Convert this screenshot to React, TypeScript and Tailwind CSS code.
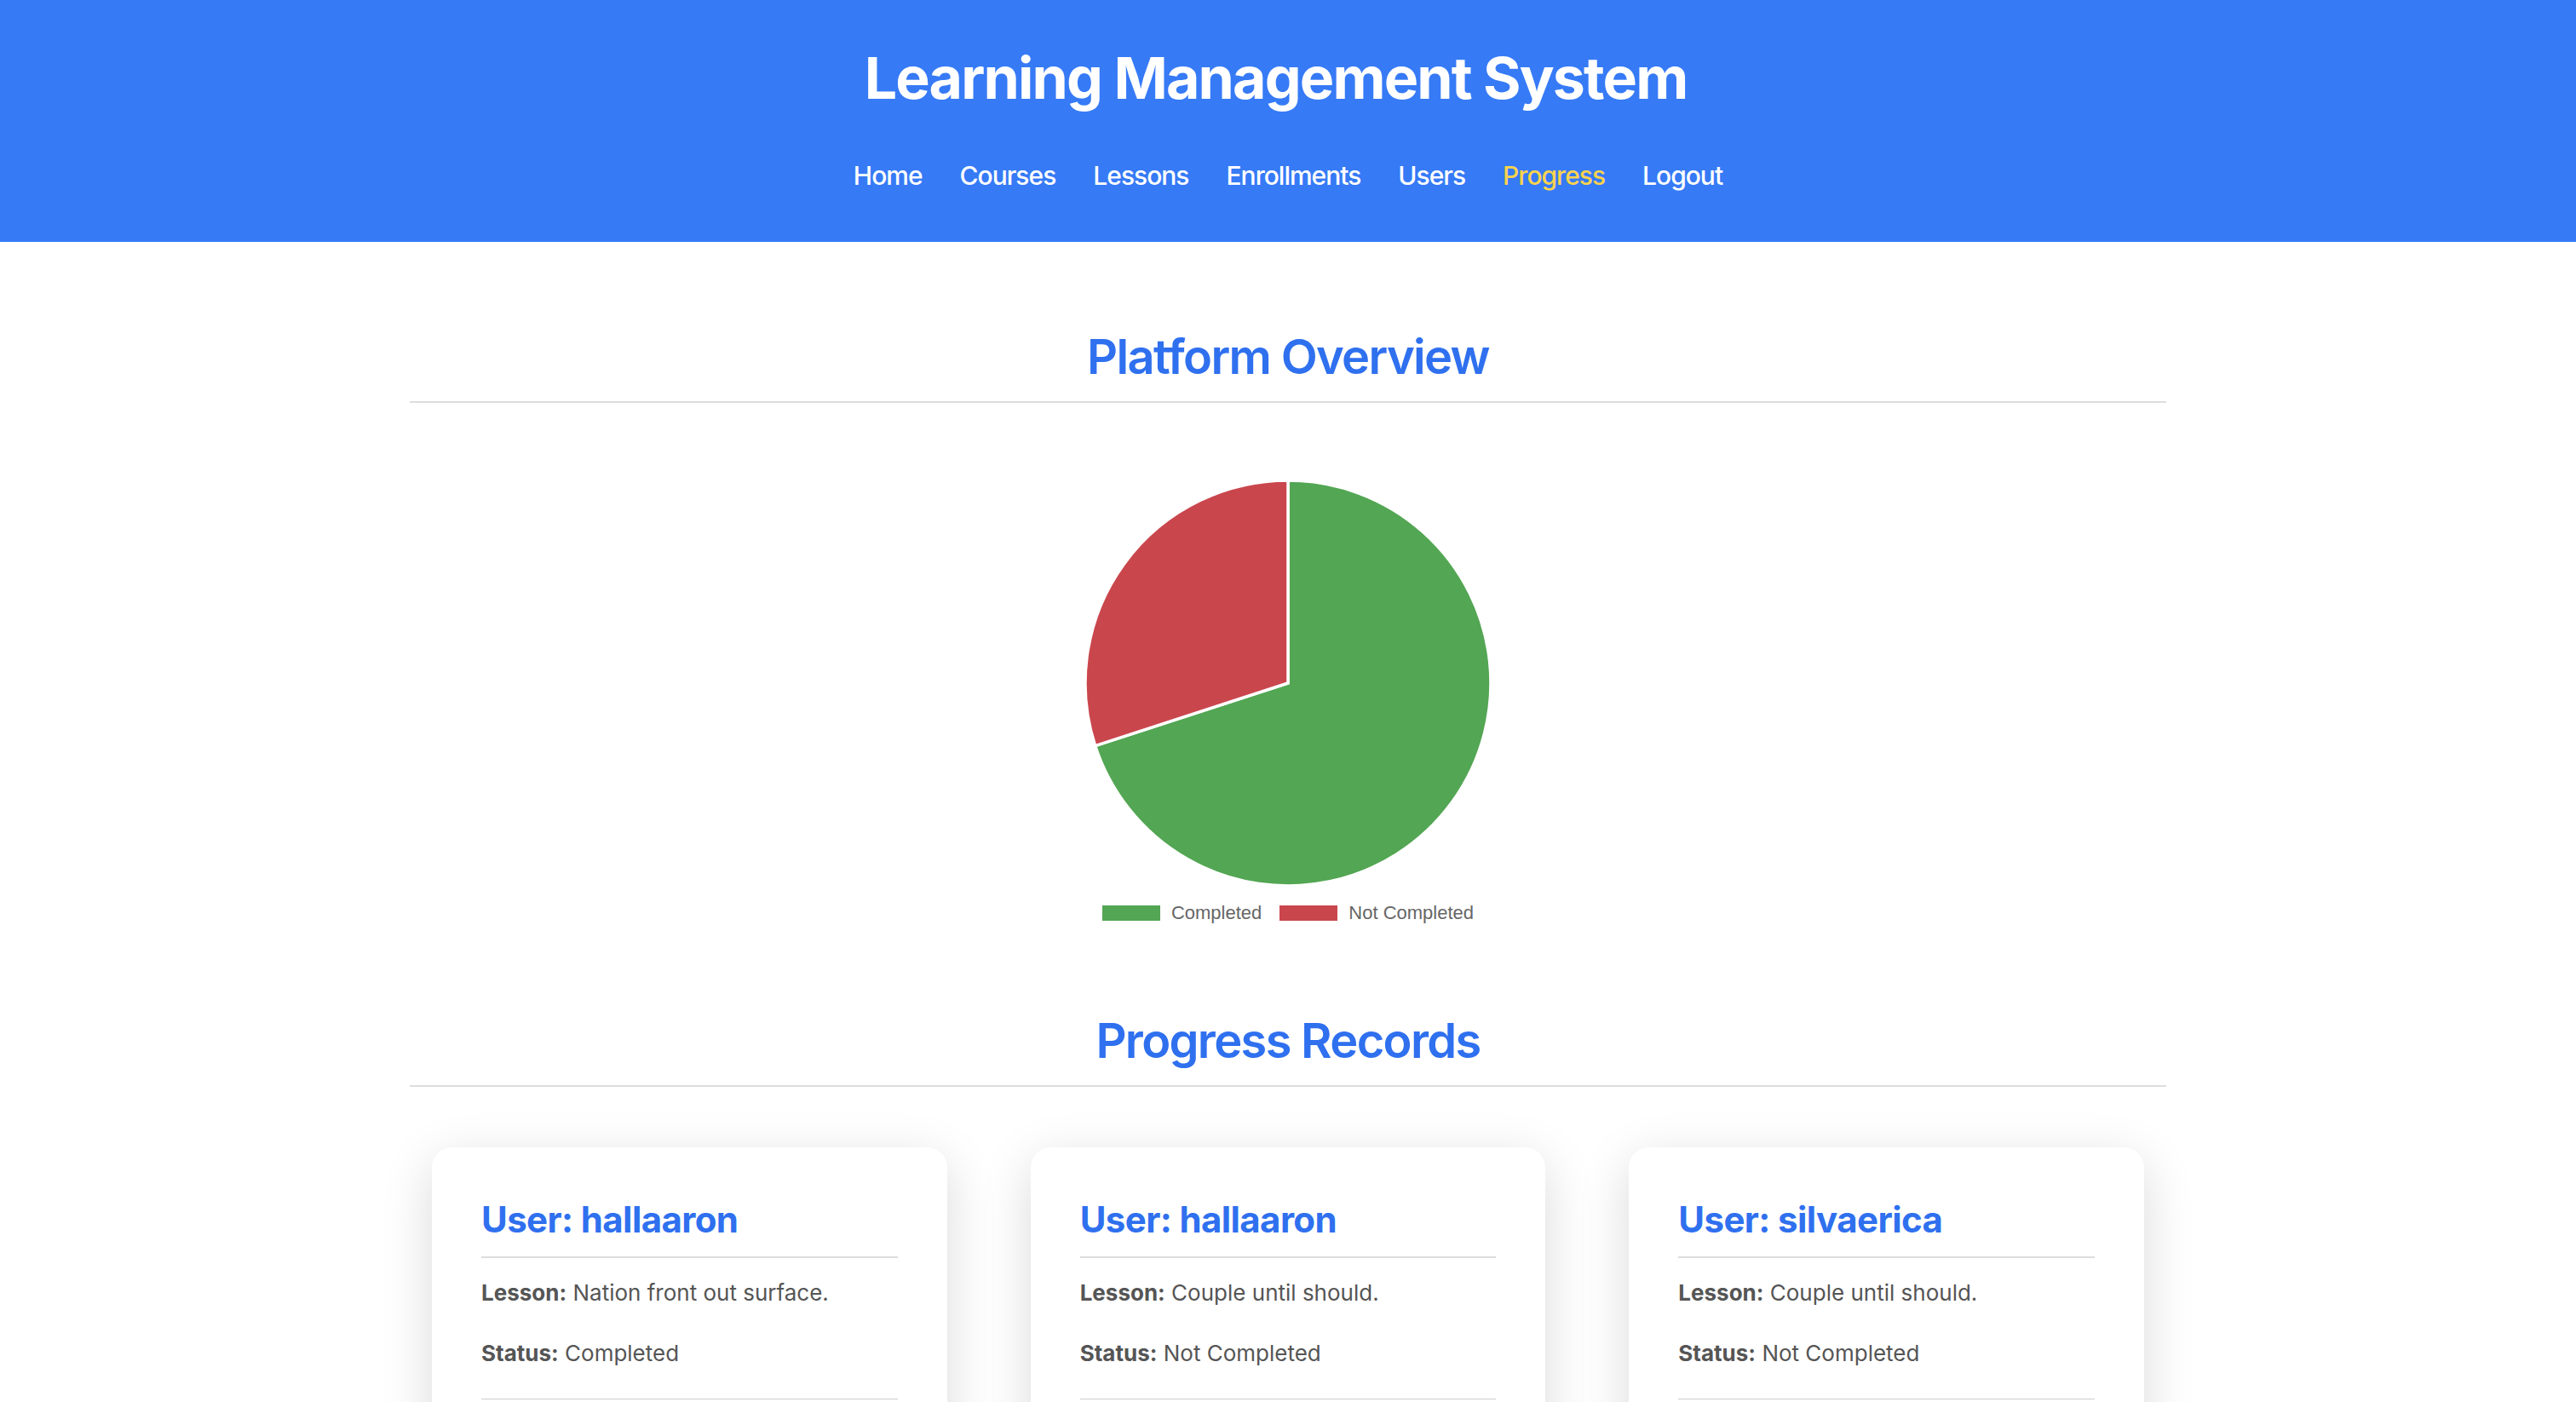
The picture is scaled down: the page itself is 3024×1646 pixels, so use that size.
import clsx from 'clsx'

const NAV = ['Home', 'Courses', 'Lessons', 'Enrollments', 'Users', 'Progress', 'Logout']

const RECORDS = [
  { user: 'hallaaron', lesson: 'Nation front out surface.', status: 'Completed' },
  { user: 'hallaaron', lesson: 'Couple until should.', status: 'Not Completed' },
  { user: 'silvaerica', lesson: 'Couple until should.', status: 'Not Completed' },
]

const GREEN = '#53a653'
const RED = '#ca464d'

export default function App() {
  return (
    <div className="min-h-screen bg-white font-['Inter','Noto_Sans',sans-serif]">
      <Header />
      <main className="mx-auto w-[2062px] pb-[200px]">
        <SectionTitle>Platform Overview</SectionTitle>
        <div className="mt-[90px] flex flex-col items-center">
          <PieChart completed={7} notCompleted={3} />
          <Legend />
        </div>
        <div className="mt-[106px]">
          <SectionTitle>Progress Records</SectionTitle>
        </div>
        <div className="mt-[71px] grid grid-cols-3 gap-[98px] px-[26px]">
          {RECORDS.map((r, idx) => (
            <RecordCard key={idx} {...r} />
          ))}
        </div>
      </main>
    </div>
  )
}

function Header() {
  return (
    <header className="bg-[#367af6] pt-[51px] pb-[58px] text-white">
      <h1 className="pr-[29px] text-center text-[68px] leading-[80px] font-bold tracking-[-1.85px]">
        Learning Management System
      </h1>
      <nav className="mt-[55px] flex justify-center gap-[44px] text-[30px] leading-[40px] font-medium tracking-[-1px]">
        {NAV.map((item) => (
          <a
            key={item}
            className={clsx(item === 'Progress' ? 'text-[#fcd34d]' : 'text-white')}
          >
            {item}
          </a>
        ))}
      </nav>
    </header>
  )
}

function SectionTitle({ children }: { children: string }) {
  return (
    <h2 className="mt-[100px] border-b-2 border-[#dddddd] pb-[17px] text-center text-[56px] leading-[70px] font-semibold tracking-[-1.7px] text-[#2f70ef]">
      {children}
    </h2>
  )
}

function PieChart({ completed, notCompleted }: { completed: number; notCompleted: number }) {
  const size = 478
  const c = size / 2
  const r = 238
  const angle = (completed / (completed + notCompleted)) * Math.PI * 2
  const x = c + r * Math.sin(angle)
  const y = c - r * Math.cos(angle)
  const large = angle > Math.PI ? 1 : 0

  return (
    <svg width={size} height={size} viewBox={`0 0 ${size} ${size}`}>
      <path
        d={`M ${c} ${c} L ${c} ${c - r} A ${r} ${r} 0 ${large} 1 ${x} ${y} Z`}
        fill={GREEN}
        stroke="#fff"
        strokeWidth={3.5}
      />
      <path
        d={`M ${c} ${c} L ${x} ${y} A ${r} ${r} 0 ${1 - large} 1 ${c} ${c - r} Z`}
        fill={RED}
        stroke="#fff"
        strokeWidth={3.5}
      />
    </svg>
  )
}

function Legend() {
  return (
    <div className="mt-[22px] flex items-center gap-[21px] font-['Liberation_Sans',Arial,sans-serif] text-[22px] leading-[18px] text-[#666]">
      <div className="flex items-center gap-[13px]">
        <span className="h-[18px] w-[68px] bg-[#53a653]" />
        <span>Completed</span>
      </div>
      <div className="flex items-center gap-[13px]">
        <span className="h-[18px] w-[68px] bg-[#ca464d]" />
        <span>Not Completed</span>
      </div>
    </div>
  )
}

interface RecordProps {
  user: string
  lesson: string
  status: string
}

function RecordCard({ user, lesson, status }: RecordProps) {
  return (
    <div className="rounded-[24px] bg-white px-[58px] pt-[60px] pb-[60px] shadow-[0_16px_60px_rgba(0,0,0,0.15)]">
      <h3 className="border-b-2 border-[#dddddd] pb-[18px] text-[42px] leading-[50px] font-bold tracking-[-0.6px] text-[#2f70ef]">
        User: {user}
      </h3>
      <p className="mt-[21px] text-[26px] leading-[40px] text-[#555]">
        <strong className="font-bold">Lesson:</strong> {lesson}
      </p>
      <p className="mt-[31px] text-[26px] leading-[40px] text-[#555]">
        <strong className="font-bold">Status:</strong> {status}
      </p>
      <div className="mt-[33px] border-t border-[#cccccc] pt-[40px] text-[26px] leading-[40px] text-[#555]">
        &nbsp;
      </div>
    </div>
  )
}
